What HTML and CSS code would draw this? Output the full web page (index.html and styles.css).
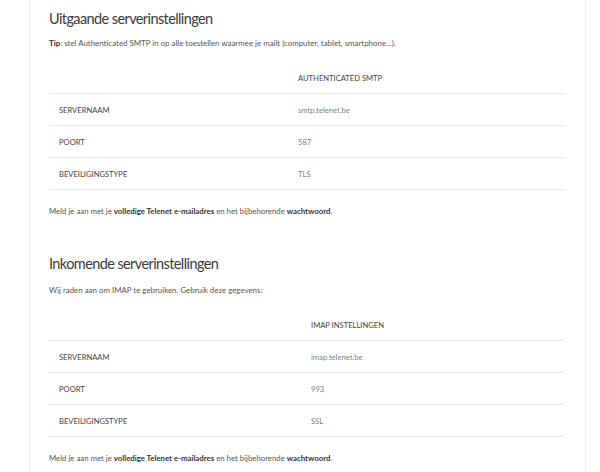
FILE: index.html
```html
<!DOCTYPE html>
<html lang="nl">
<head>
<meta charset="utf-8">
<link rel="stylesheet" href="styles.css">
</head>
<body>
<div class="card">
  <section class="section">
    <h2 class="title">Uitgaande serverinstellingen</h2>
    <p class="intro"><b>Tip</b>: stel Authenticated SMTP in op alle toestellen waarmee je mailt (computer, tablet, smartphone...).</p>
    <div class="table t-smtp">
      <div class="row head"><div class="cell"></div><div class="cell">AUTHENTICATED SMTP</div></div>
      <div class="row"><div class="cell label">SERVERNAAM</div><div class="cell value">smtp.telenet.be</div></div>
      <div class="row"><div class="cell label">POORT</div><div class="cell value">587</div></div>
      <div class="row"><div class="cell label">BEVEILIGINGSTYPE</div><div class="cell value">TLS</div></div>
    </div>
    <p class="note">Meld je aan met je <b>volledige Telenet e-mailadres</b> en het bijbehorende <b>wachtwoord</b>.</p>
  </section>
  <section class="section">
    <h2 class="title">Inkomende serverinstellingen</h2>
    <p class="intro">Wij raden aan om IMAP te gebruiken. Gebruik deze gegevens:</p>
    <div class="table t-imap">
      <div class="row head"><div class="cell"></div><div class="cell">IMAP INSTELLINGEN</div></div>
      <div class="row"><div class="cell label">SERVERNAAM</div><div class="cell value">imap.telenet.be</div></div>
      <div class="row"><div class="cell label">POORT</div><div class="cell value">993</div></div>
      <div class="row"><div class="cell label">BEVEILIGINGSTYPE</div><div class="cell value">SSL</div></div>
    </div>
    <p class="note">Meld je aan met je <b>volledige Telenet e-mailadres</b> en het bijbehorende <b>wachtwoord</b>.</p>
  </section>
</div>
</body>
</html>
```
FILE: styles.css
```css
html, body {
  margin: 0;
  padding: 0;
  background: #ffffff;
}
body {
  font-family: Lato, "Open Sans", sans-serif;
  color: #555;
  height: 472px;
  overflow: hidden;
}
.card {
  margin-left: 29px;
  width: 557px;
  min-height: 472px;
  border-left: 1px solid #eeeeee;
  border-right: 1px solid #eeeeee;
  padding: 0 20px 0 19px;
  box-sizing: border-box;
}
.section {
  padding-top: 7px;
}
.section + .section {
  padding-top: 35px;
}
.title {
  margin: 0;
  font-weight: 400;
  font-size: 14.5px;
  letter-spacing: -0.6px;
  line-height: 24px;
  color: #3a3a3a;
}
.intro {
  margin: 6px 0 0;
  font-size: 7.9px;
  line-height: 12px;
  color: #555;
}
.section + .section .intro {
  margin-top: 8px;
}
.intro b {
  color: #333;
}
.table {
  margin-top: 13px;
}
.section + .section .table {
  margin-top: 13px;
}
.row {
  display: grid;
  height: 32px;
  align-items: center;
  border-bottom: 1px solid #e8e8e8;
  box-sizing: border-box;
  font-size: 7.6px;
}
.t-smtp .row { grid-template-columns: 239px 1fr; }
.t-imap .row { grid-template-columns: 252px 1fr; }
.cell {
  padding-left: 10px;
}
.head .cell {
  color: #444;
}
.label {
  color: #444;
}
.value {
  color: #808080;
}
.note {
  margin: 15px 0 0;
  font-size: 7.8px;
  line-height: 12px;
  color: #555;
}
.note b {
  color: #333;
}
```
